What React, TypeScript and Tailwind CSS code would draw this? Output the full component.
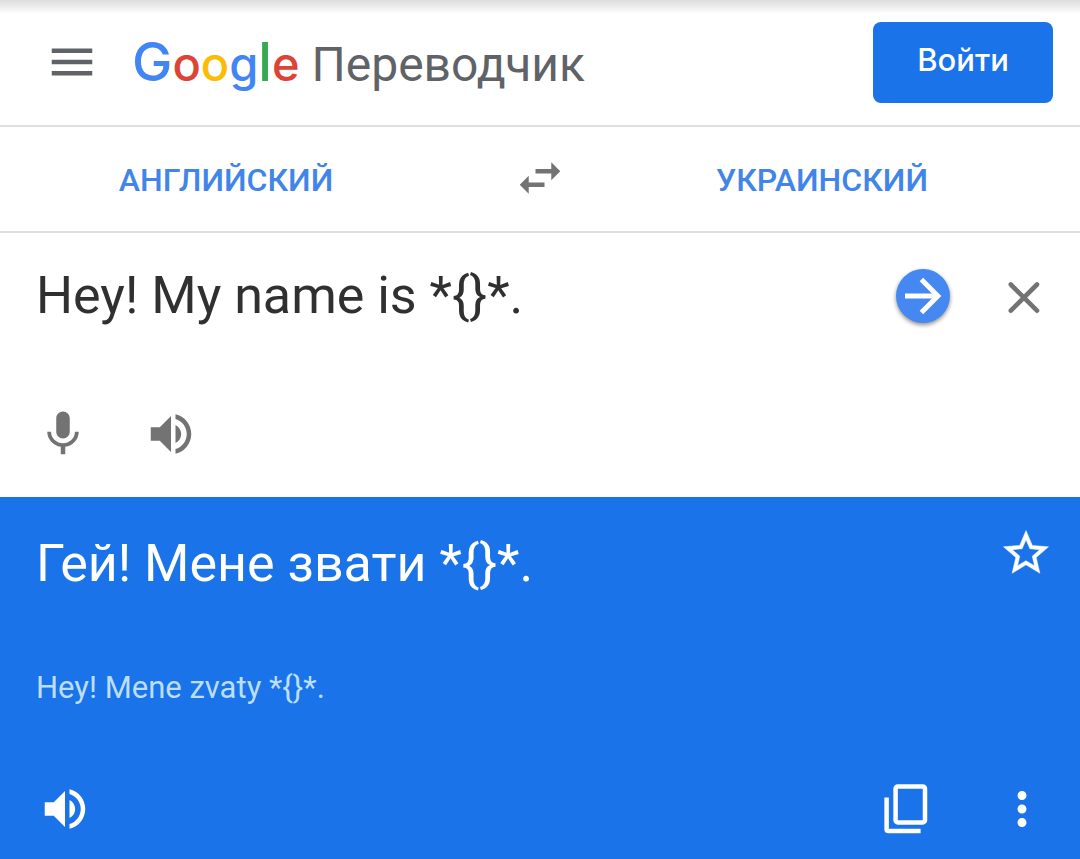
import { useState } from "react";
import type { ReactNode } from "react";
import { MdMenu, MdMoreVert, MdSwapHoriz } from "react-icons/md";

function IconButton({
  label,
  className = "",
  children,
}: {
  label: string;
  className?: string;
  children: ReactNode;
}) {
  return (
    <button
      type="button"
      aria-label={label}
      className={`flex size-[54px] shrink-0 items-center justify-center ${className}`}
    >
      {children}
    </button>
  );
}

function ArrowIcon() {
  return (
    <svg viewBox="0 0 24 24" className="size-[54px]" fill="none" stroke="currentColor" strokeWidth="2.2" aria-hidden="true">
      <path d="M4 12H18.4M11.3 4.7L18.6 12l-7.3 7.3" />
    </svg>
  );
}

function StarIcon() {
  return (
    <svg viewBox="0 0 24 24" className="size-[54px]" fill="currentColor" stroke="currentColor" strokeWidth="0.2" aria-hidden="true">
      <path d="M22 9.24l-7.19-.62L12 2 9.19 8.63 2 9.24l5.46 4.73L5.82 21 12 17.27 18.18 21l-1.63-7.03L22 9.24zM12 15.4l-3.76 2.27 1-4.28-3.32-2.88 4.38-.38L12 6.1l1.71 4.04 4.38.38-3.32 2.88 1 4.28L12 15.4z" />
    </svg>
  );
}

function MicIcon() {
  return (
    <svg viewBox="0 0 24 24" className="size-[54px]" fill="currentColor" aria-hidden="true">
      <path d="M12 14c1.66 0 3-1.34 3-3V5c0-1.66-1.34-3-3-3S9 3.34 9 5v6c0 1.66 1.34 3 3 3zm5.3-3c0 3-2.54 5.1-5.3 5.1S6.7 14 6.7 11H5c0 3.41 2.72 6.23 6 6.72V21h2v-3.28c3.28-.48 6-3.3 6-6.72h-1.7z" />
    </svg>
  );
}

function SpeakerIcon() {
  return (
    <svg viewBox="0 0 24 24" className="size-[54px]" fill="currentColor" aria-hidden="true">
      <path d="M3 9v6h4l5 5V4L7 9H3zm13.5 3c0-1.77-1.02-3.29-2.5-4.03v8.05c1.48-.73 2.5-2.25 2.5-4.02zM14 3.23v2.06c2.89.86 5 3.54 5 6.71s-2.11 5.85-5 6.71v2.06c4.01-.91 7-4.49 7-8.77s-2.99-7.86-7-8.77z" />
    </svg>
  );
}

function CloseIcon() {
  return (
    <svg viewBox="0 0 54 54" className="size-[54px]" stroke="currentColor" strokeWidth="4.6" aria-hidden="true">
      <path d="M13.8 15.5L40 41.7M40 15.5L13.8 41.7" strokeLinecap="round" />
    </svg>
  );
}

function CopyIcon() {
  return (
    <svg viewBox="0 0 54 54" className="size-[54px]" fill="none" stroke="currentColor" strokeWidth="4.5" aria-hidden="true">
      <rect x="17.6" y="4.4" width="29.4" height="36" rx="2.2" />
      <path d="M8.6 15.5V47.3a1.8 1.8 0 0 0 1.8 1.8H42.6" />
    </svg>
  );
}

function Brand() {
  return (
    <h1 className="flex items-baseline gap-3 pt-0.5 leading-[60px] whitespace-nowrap">
      <span className="font-['Inter','Roboto',sans-serif] text-[47px] font-medium">
        <span className="text-[54px] text-[#4285f4]">G</span>
        <span className="text-[#dc4437]">o</span>
        <span className="text-[#fbbc05]">o</span>
        <span className="text-[#4285f4]">g</span>
        <span className="text-[54px] text-[#34a853]">l</span>
        <span className="text-[#dc4437]">e</span>
      </span>
      <span className="text-[48px] text-[#5f6368]">Переводчик</span>
    </h1>
  );
}

export default function App() {
  const [source, setSource] = useState("Hey! My name is *{}*.");

  return (
    <div className="flex min-h-screen flex-col bg-white font-['Roboto','Noto_Sans',sans-serif]">
      <header className="flex h-[127px] items-center border-b-2 border-[#dfdfdf] bg-linear-to-b from-[#dcdcdc] to-white to-[14px] pr-[27px] pl-[45px]">
        <IconButton label="Меню" className="mr-[33px] mb-0.5 text-[#5f6368]">
          <MdMenu size={54} />
        </IconButton>
        <Brand />
        <button
          type="button"
          className="ml-auto h-[81px] w-[180px] rounded-lg bg-[#1a73e8] pb-1 font-['Inter','Roboto',sans-serif] text-[31px] font-medium text-white"
        >
          Войти
        </button>
      </header>

      <nav className="grid h-[106px] grid-cols-[1fr_88px_1fr] items-center border-b-2 border-[#dfdfdf] text-[32px] font-medium text-[#4285e8]">
        <button type="button" className="pt-0.5 pr-11">АНГЛИЙСКИЙ</button>
        <IconButton label="Поменять языки местами" className="mb-0.5 justify-self-center text-[#737373]">
          <MdSwapHoriz size={54} />
        </IconButton>
        <button type="button" className="pt-0.5 pr-5">УКРАИНСКИЙ</button>
      </nav>

      <main className="flex flex-1 flex-col">
        <section className="flex h-[264px] flex-col justify-between pt-8 pb-9">
          <div className="flex items-start pr-[29px] pl-9">
            <textarea
              aria-label="Исходный текст"
              rows={1}
              value={source}
              onChange={(event) => setSource(event.target.value)}
              className="min-w-0 flex-1 resize-none overflow-hidden text-[52px] leading-[62px] text-[#303030] outline-none"
            />
            <div className="flex gap-[47px] pt-1 text-[#737373]">
              <IconButton
                label="Перевести"
                className="rounded-full bg-[#4688f1] text-white shadow-[0_2px_4px_rgba(0,0,0,0.45)]"
              >
                <ArrowIcon />
              </IconButton>
              <IconButton label="Очистить">
                <CloseIcon />
              </IconButton>
            </div>
          </div>
          <div className="flex gap-[54px] pl-9 text-[#737373]">
            <IconButton label="Голосовой ввод">
              <MicIcon />
            </IconButton>
            <IconButton label="Прослушать исходный текст">
              <SpeakerIcon />
            </IconButton>
          </div>
        </section>

        <section className="flex flex-1 flex-col bg-[#1a73e8] pt-[29px] pb-[23px] text-white">
          <div className="flex items-start justify-between pr-[27px] pl-9">
            <p className="pt-1.5 text-[52px] leading-[64px]">Гей! Мене звати *{"{}"}*.</p>
            <IconButton label="Сохранить перевод">
              <StarIcon />
            </IconButton>
          </div>
          <p className="mt-[72px] pl-9 text-[31px] leading-10 text-[#bbdefb]">
            Hey! Mene zvaty *{"{}"}*.
          </p>
          <div className="mt-auto flex items-center pr-[31px] pl-[38px]">
            <IconButton label="Прослушать перевод">
              <SpeakerIcon />
            </IconButton>
            <IconButton label="Копировать" className="mr-[63px] ml-auto">
              <CopyIcon />
            </IconButton>
            <IconButton label="Ещё">
              <MdMoreVert size={54} />
            </IconButton>
          </div>
        </section>
      </main>
    </div>
  );
}
